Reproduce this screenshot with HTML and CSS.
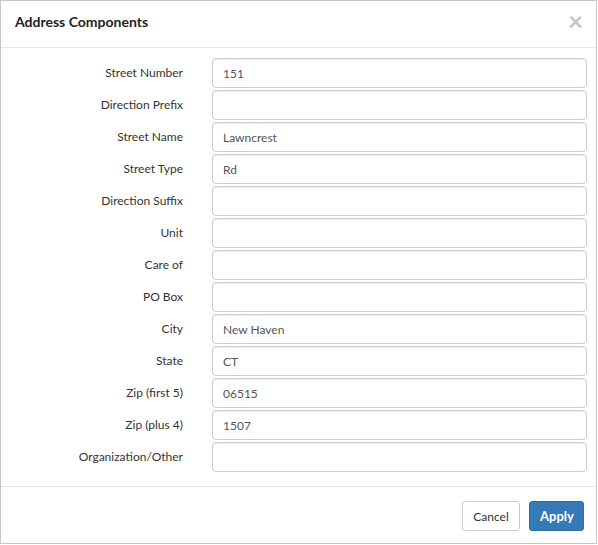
FILE: index.html
```html
<!DOCTYPE html>
<html>
<head>
<meta charset="utf-8">
<link rel="stylesheet" href="styles.css">
</head>
<body>
<div class="modal">
  <div class="modal-header">
    <h4 class="modal-title">Address Components</h4>
    <span class="close">×</span>
  </div>
  <div class="modal-body">
    <label class="lbl">Street Number</label><input class="inp" value="151">
    <label class="lbl">Direction Prefix</label><input class="inp" value="">
    <label class="lbl">Street Name</label><input class="inp" value="Lawncrest">
    <label class="lbl">Street Type</label><input class="inp" value="Rd">
    <label class="lbl">Direction Suffix</label><input class="inp" value="">
    <label class="lbl">Unit</label><input class="inp" value="">
    <label class="lbl">Care of</label><input class="inp" value="">
    <label class="lbl">PO Box</label><input class="inp" value="">
    <label class="lbl">City</label><input class="inp" value="New Haven">
    <label class="lbl">State</label><input class="inp" value="CT">
    <label class="lbl">Zip (first 5)</label><input class="inp" value="06515">
    <label class="lbl">Zip (plus 4)</label><input class="inp" value="1507">
    <label class="lbl">Organization/Other</label><input class="inp" value="">
  </div>
  <div class="modal-footer">
    <button class="btn btn-default">Cancel</button>
    <button class="btn btn-primary">Apply</button>
  </div>
</div>
</body>
</html>
```
FILE: styles.css
```css
* { box-sizing: border-box; }
html, body { margin: 0; padding: 0; background: #fff; }
body {
  font-family: Lato, "Noto Sans", "Liberation Sans", sans-serif;
  font-size: 12px;
  color: #333;
}
.modal {
  width: 597px;
  height: 544px;
  border: 1px solid #c8c8c8;
  display: flex;
  flex-direction: column;
  background: #fff;
}
.modal-header {
  height: 47px;
  border-bottom: 1px solid #e5e5e5;
  display: flex;
  align-items: center;
  justify-content: space-between;
  padding: 0 13px 6px 14px;
}
.modal-title {
  margin: 0;
  font-size: 14px;
  font-weight: bold;
  color: #222;
}
.close {
  font-size: 26px;
  font-weight: bold;
  line-height: 1;
  color: #c4c4c4;
  padding-bottom: 1px;
}
.modal-body {
  display: grid;
  grid-template-columns: 167px 375px;
  column-gap: 29px;
  row-gap: 2px;
  padding: 10px 0 14px 15px;
  align-items: center;
}
.lbl {
  text-align: right;
  font-size: 12px;
  color: #333;
  padding-bottom: 1px;
}
.inp {
  height: 30px;
  width: 375px;
  border: 1px solid #ccc;
  border-radius: 4px;
  padding: 0 10px;
  font-family: inherit;
  font-size: 12px;
  color: #555;
  box-shadow: inset 0 1px 1px rgba(0,0,0,0.075);
  outline: none;
}
.modal-footer {
  flex: 1;
  border-top: 1px solid #e5e5e5;
  display: flex;
  justify-content: flex-end;
  align-items: flex-start;
  gap: 9px;
  padding: 14px 12px 0 0;
}
.btn {
  height: 30px;
  font-family: inherit;
  font-size: 12px;
  border-radius: 3px;
  padding: 0 10px;
  border: 1px solid;
  cursor: pointer;
}
.btn-default {
  width: 58px;
  background: #fff;
  border-color: #ccc;
  color: #333;
}
.btn-primary {
  width: 55px;
  background: #337ab7;
  border-color: #2e6da4;
  color: #fff;
  font-weight: bold;
  font-size: 13px;
}
```
